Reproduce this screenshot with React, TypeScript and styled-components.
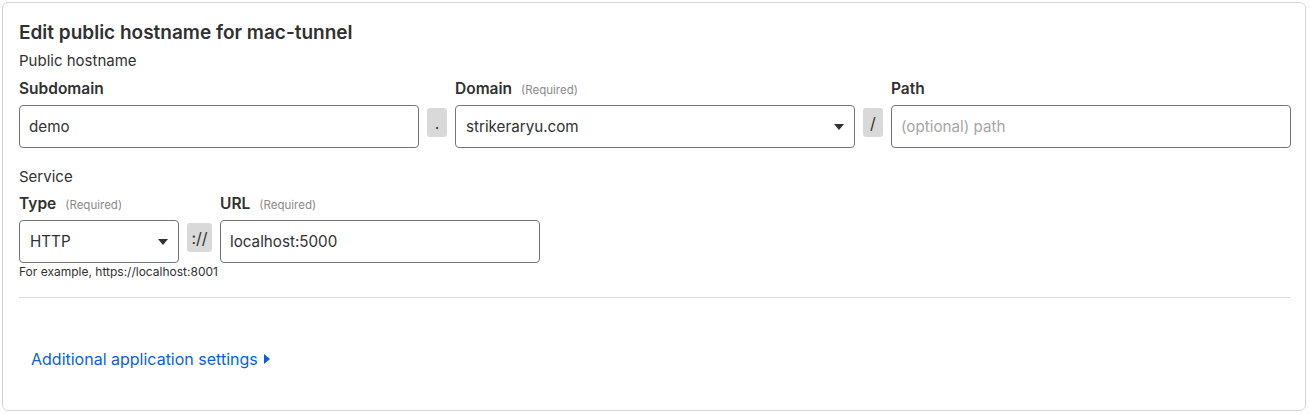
import React from "react";
import styled, { createGlobalStyle } from "styled-components";

const GlobalStyle = createGlobalStyle`
  body {
    margin: 0;
    background: #ffffff;
    font-family: Inter, "Liberation Sans", sans-serif;
    color: #313131;
  }
`;

const Page = styled.div`
  padding: 2px;
`;

const Card = styled.section`
  width: 1304px;
  height: 409px;
  box-sizing: border-box;
  border: 1px solid #d5d5d5;
  border-radius: 6px;
  padding: 17px 14px 0 16px;
`;

const Title = styled.h2`
  margin: 0;
  font-size: 19px;
  line-height: 26px;
  font-weight: 600;
  color: #313131;
`;

const SectionName = styled.div<{ $gap?: number }>`
  margin-top: ${(p) => p.$gap ?? 4}px;
  font-size: 15px;
  line-height: 22px;
  color: #313131;
`;

const FieldGrid = styled.div<{ $columns: string; $top?: number }>`
  display: grid;
  grid-template-columns: ${(p) => p.$columns};
  column-gap: 8px;
  row-gap: 4px;
  margin-top: ${(p) => p.$top ?? 6}px;
`;

const Label = styled.label`
  display: flex;
  align-items: baseline;
  gap: 9px;
  font-size: 15.5px;
  line-height: 22px;
  font-weight: 600;
  color: #313131;
`;

const Required = styled.span`
  font-size: 11.5px;
  font-weight: 400;
  color: #8a8a8a;
`;

const Input = styled.input`
  box-sizing: border-box;
  width: 100%;
  height: 43px;
  margin: 0;
  padding: 0 9px;
  border: 1px solid #757575;
  border-radius: 4px;
  font-family: inherit;
  font-size: 15.2px;
  color: #313131;
  background: #fff;
  outline: none;

  &::placeholder {
    color: #a6a6a6;
  }
`;

const SelectBox = styled.div`
  box-sizing: border-box;
  height: 43px;
  display: flex;
  align-items: center;
  justify-content: space-between;
  padding: 0 10px;
  border: 1px solid #757575;
  border-radius: 4px;
  font-size: 15.2px;
  color: #313131;
`;

const Separator = styled.div`
  align-self: start;
  margin-top: 3px;
  height: 29px;
  display: flex;
  align-items: center;
  justify-content: center;
  background: #d9d9d9;
  border-radius: 3px;
  font-size: 16px;
  color: #313131;
`;

const Helper = styled.div`
  grid-column: 1 / 4;
  margin-top: -4px;
  font-size: 12px;
  line-height: 18px;
  color: #313131;
`;

const Divider = styled.hr`
  margin: 16px 0 0;
  width: 1272px;
  border: none;
  border-top: 1px solid #d9d9d9;
`;

const MoreLink = styled.a`
  display: inline-flex;
  align-items: center;
  gap: 6px;
  margin: 50px 0 0 12px;
  font-size: 16px;
  line-height: 22px;
  color: #0a5fe0;
  text-decoration: none;
  cursor: pointer;
`;

const Caret = () => (
  <svg width="10" height="6" viewBox="0 0 10 6">
    <path d="M0 0h10L5 6z" fill="#313131" />
  </svg>
);

const RightCaret = () => (
  <svg width="6" height="10" viewBox="0 0 6 10">
    <path d="M0 0l6 5-6 5z" fill="#0a5fe0" />
  </svg>
);

export default function App() {
  return (
    <Page>
      <GlobalStyle />
      <Card>
        <Title>Edit public hostname for mac-tunnel</Title>
        <SectionName>Public hostname</SectionName>
        <FieldGrid $columns="400px 20px 400px 20px 400px">
          <Label>Subdomain</Label>
          <span />
          <Label>
            Domain <Required>(Required)</Required>
          </Label>
          <span />
          <Label>Path</Label>

          <Input defaultValue="demo" />
          <Separator>.</Separator>
          <SelectBox>
            strikeraryu.com
            <Caret />
          </SelectBox>
          <Separator>/</Separator>
          <Input placeholder="(optional) path" />
        </FieldGrid>

        <SectionName $gap={18}>Service</SectionName>
        <FieldGrid $columns="160px 25px 320px" $top={5}>
          <Label>
            Type <Required>(Required)</Required>
          </Label>
          <span />
          <Label>
            URL <Required>(Required)</Required>
          </Label>

          <SelectBox>
            HTTP
            <Caret />
          </SelectBox>
          <Separator>://</Separator>
          <Input defaultValue="localhost:5000" />
          <Helper>For example, https://localhost:8001</Helper>
        </FieldGrid>

        <Divider />
        <MoreLink>
          Additional application settings
          <RightCaret />
        </MoreLink>
      </Card>
    </Page>
  );
}
